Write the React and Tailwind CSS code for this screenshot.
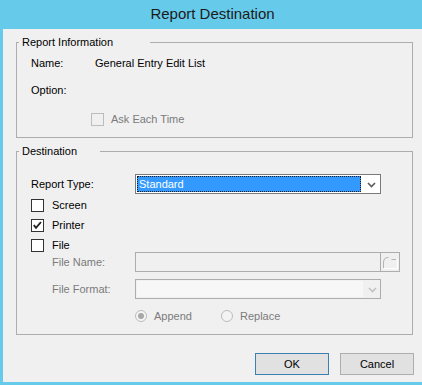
import { useState } from "react";

function Check({ checked, disabled }) {
  return (
    <span
      className={`w-[13px] h-[13px] shrink-0 flex items-center justify-center border ${
        disabled ? "border-[#bcbcbc] bg-[#f0f0f0]" : "border-[#333333] bg-white"
      }`}
    >
      {checked && (
        <svg width="11" height="11" viewBox="0 0 11 11">
          <polyline
            points="1.8,5.2 4,7.8 9,2"
            fill="none"
            stroke="#222"
            strokeWidth="1.9"
          />
        </svg>
      )}
    </span>
  );
}

function Radio({ checked }) {
  return (
    <span className="w-[12px] h-[12px] shrink-0 rounded-full border border-[#bcbcbc] bg-[#f4f4f4] flex items-center justify-center">
      {checked && <span className="w-[6px] h-[6px] rounded-full bg-[#a8a8a8]" />}
    </span>
  );
}

function Chevron({ color }) {
  return (
    <svg width="9" height="6" viewBox="0 0 9 6">
      <polyline points="1,1 4.5,4.5 8,1" fill="none" stroke={color} strokeWidth="1.6" />
    </svg>
  );
}

export default function App() {
  const [dest, setDest] = useState({ screen: false, printer: true, file: false });

  return (
    <div className="w-[422px] h-[385px] bg-[#66cbea] flex flex-col font-['Liberation_Sans',Arial,sans-serif] text-[11px] text-black overflow-hidden">
      {/* Title bar */}
      <div className="h-[29px] shrink-0 flex items-center justify-center pl-[3px] text-[15px] text-[#1b1b1b]">
        Report Destination
      </div>

      <div className="ml-[3px] h-[353px] bg-[#f0f0f0] flex flex-col">
        {/* Report Information */}
        <div className="relative mt-[13px] ml-[13px] w-[397px] h-[96px] border border-[#adadad] flex flex-col pl-[14px] pt-[10px]">
          <span className="absolute left-[2px] -top-[8px] h-[14px] w-[131px] bg-[#f0f0f0] pl-[3px] leading-[14px]">
            Report Information
          </span>
          <div className="h-[20px] flex items-center">
            <span className="w-[64px]">Name:</span>
            <span>General Entry Edit List</span>
          </div>
          <div className="h-[20px] mt-[7px] flex items-center">Option:</div>
          <div className="h-[20px] mt-[9px] flex items-center pl-[60px]">
            <Check disabled />
            <span className="ml-[7px] text-[#7b7b7b]">Ask Each Time</span>
          </div>
        </div>

        {/* Destination */}
        <div className="relative mt-[13px] ml-[13px] w-[397px] h-[184px] border border-[#adadad] flex flex-col pl-[14px] pt-[22px]">
          <span className="absolute left-[2px] -top-[8px] h-[14px] w-[81px] bg-[#f0f0f0] pl-[3px] leading-[14px]">
            Destination
          </span>

          <div className="h-[20px] flex items-center">
            <span className="w-[104px]">Report Type:</span>
            <div className="w-[246px] h-[20px] border border-[#7a7a7a] bg-white flex items-stretch">
              <div className="m-[1px] w-[224px] bg-[#3399ff] border border-dotted border-[#1a1a1a] text-white leading-[14px] pl-[1px]">
                Standard
              </div>
              <div className="flex-1 flex items-center justify-center pt-[1px]">
                <Chevron color="#5a5a5a" />
              </div>
            </div>
          </div>

          {[
            ["screen", "Screen", "h-[20px] mt-[1px]"],
            ["printer", "Printer", "h-[20px]"],
            ["file", "File", "h-[17px]"],
          ].map(([k, label, cls]) => (
            <div
              key={k}
              className={`${cls} flex items-start cursor-default`}
              onClick={() => setDest({ ...dest, [k]: !dest[k] })}
            >
              <span className="mt-[4px]">
                <Check checked={dest[k]} />
              </span>
              <span className="ml-[8px] leading-[20px]">{label}</span>
            </div>
          ))}

          <div className="h-[20px] flex items-center pl-[21px]">
            <span className="w-[83px] text-[#7b7b7b]">File Name:</span>
            <div className="w-[246px] h-[20px] border border-[#adadad] bg-[#f0f0f0]" />
            <div className="-ml-[1px] w-[20px] h-[20px] border border-[#adadad] bg-[#f0f0f0]">
              <svg width="18" height="18" viewBox="0 0 18 18">
                <path d="M2.5 15 V9 Q2.5 5 6 4.5 H7.5" fill="none" stroke="#b5b5b5" strokeWidth="1" />
                <path d="M10.5 6.5 H15" fill="none" stroke="#b5b5b5" strokeWidth="1" />
                <path d="M2.5 15.5 H16.5 V6.5" fill="none" stroke="#ffffff" strokeWidth="1" />
              </svg>
            </div>
          </div>

          <div className="h-[20px] mt-[7px] flex items-center pl-[21px]">
            <span className="w-[83px] text-[#7b7b7b]">File Format:</span>
            <div className="w-[246px] h-[20px] border border-[#adadad] bg-[#f0f0f0] flex items-stretch">
              <div className="m-[1px] w-[226px] bg-[#f7f7f7]" />
              <div className="flex-1 flex items-center justify-center pt-[1px]">
                <Chevron color="#c2c2c2" />
              </div>
            </div>
          </div>

          <div className="h-[20px] mt-[7px] flex items-center pl-[104px] text-[#7b7b7b]">
            <div className="w-[86px] flex items-center">
              <Radio checked />
              <span className="ml-[7px]">Append</span>
            </div>
            <div className="flex items-center">
              <Radio />
              <span className="ml-[7px]">Replace</span>
            </div>
          </div>
        </div>

        {/* Buttons */}
        <div className="mt-[18px] flex justify-end gap-[11px] pr-[8px]">
          <button className="w-[74px] h-[22px] border border-[#3c7fb1] bg-[#e1e1e1] text-[11px]">
            OK
          </button>
          <button className="w-[74px] h-[22px] border border-[#adadad] bg-[#e1e1e1] text-[11px]">
            Cancel
          </button>
        </div>
      </div>
    </div>
  );
}
